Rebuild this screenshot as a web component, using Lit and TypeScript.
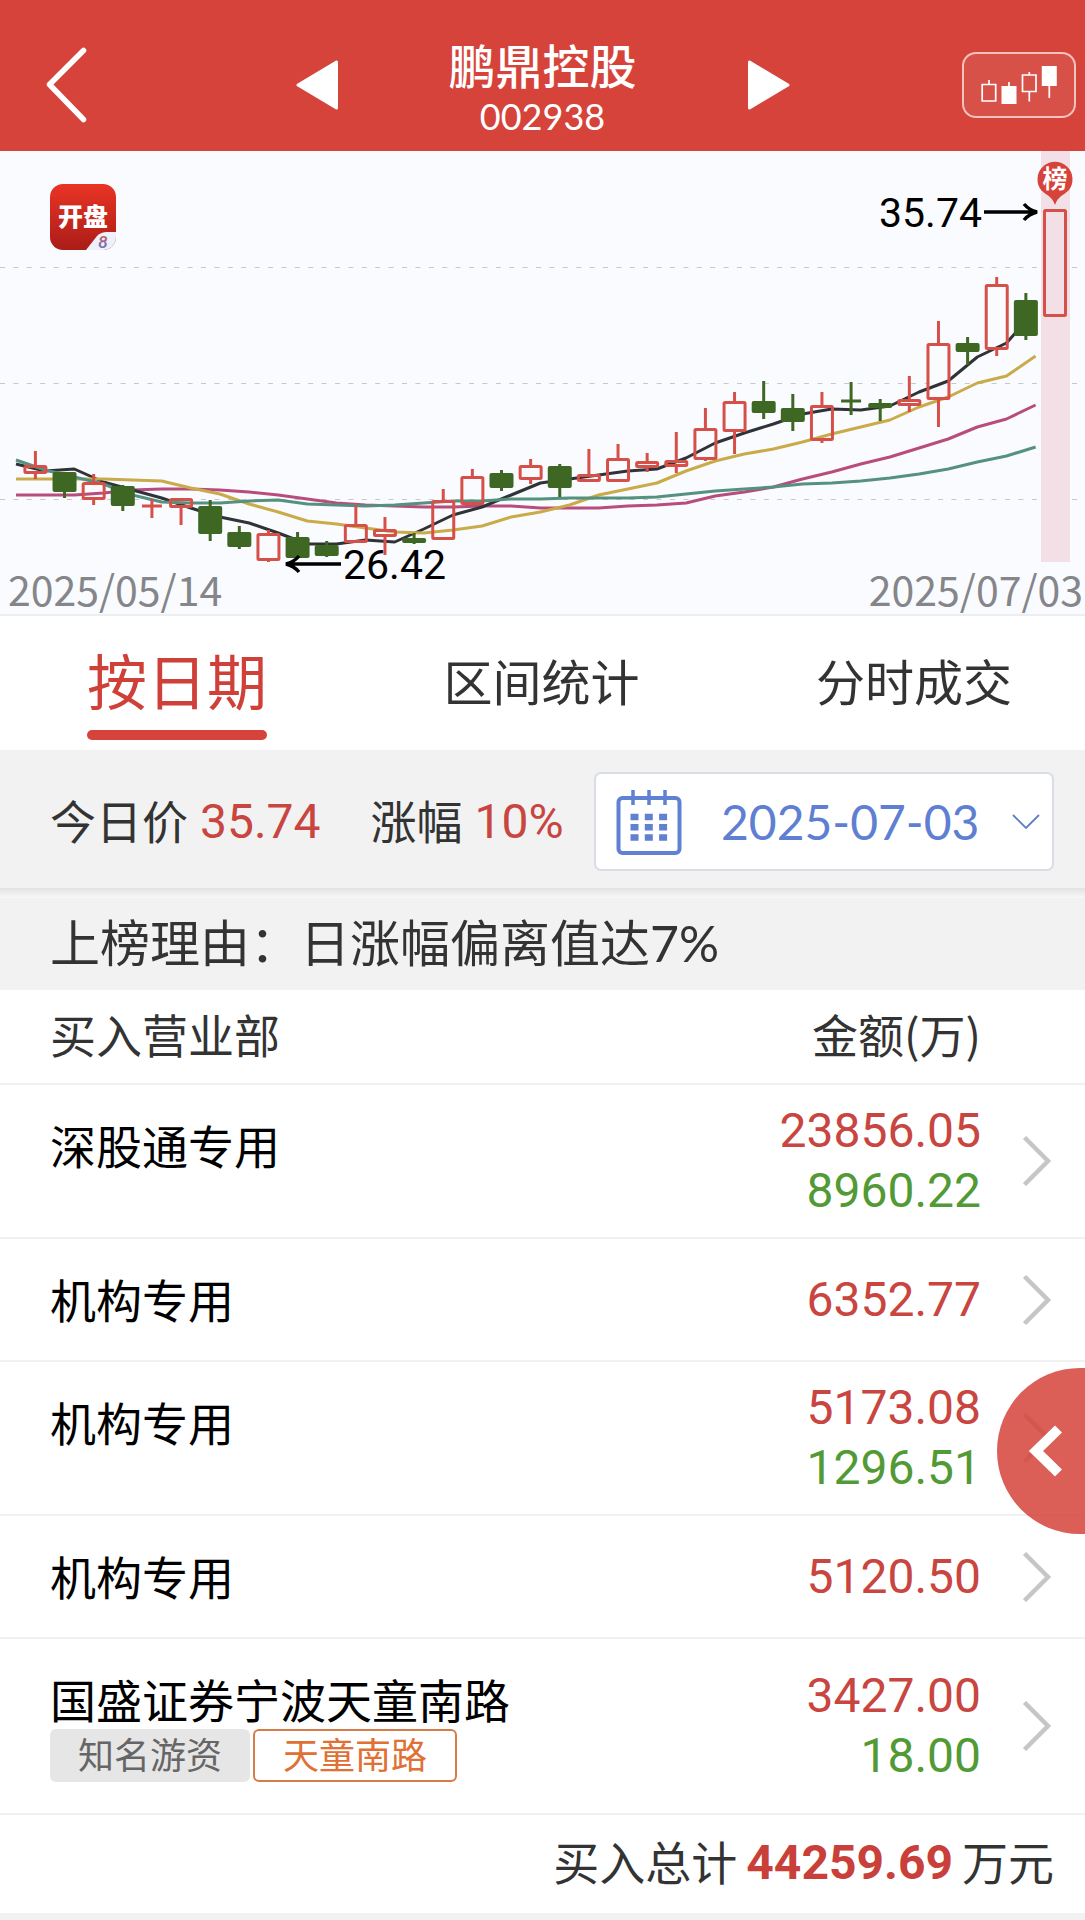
import { LitElement, html, svg, css, nothing } from "lit";
import { customElement, property, state } from "lit/decorators.js";
import { classMap } from "lit/directives/class-map.js";

type Candle = { up: boolean; top: number; bottom: number; high: number; low: number };

const up = (top: number, bottom: number, high: number, low: number): Candle => ({ up: true, top, bottom, high, low });
const down = (top: number, bottom: number, high: number, low: number): Candle => ({ up: false, top, bottom, high, low });

const CANDLES: Candle[] = [
  up(465, 474, 451, 479), down(472, 492, 472, 498), up(482, 500, 474, 505), down(486, 506, 485, 511),
  up(506, 507, 499, 518), up(498, 508, 498, 525), down(506, 534, 500, 541), down(532, 547, 526, 549),
  up(533, 561, 530, 562), down(537, 558, 532, 558), down(545, 556, 541, 557), up(524, 543, 505, 543),
  up(529, 537, 517, 555), down(538, 543, 533, 544), up(500, 540, 489, 540), up(476, 505, 469, 505),
  down(473, 488, 470, 491), up(465, 480, 459, 484), down(466, 488, 464, 497), up(474, 482, 449, 482),
  up(458, 482, 444, 482), up(461, 468, 453, 472), up(460, 467, 432, 473), up(428, 460, 408, 461),
  up(401, 432, 392, 454), down(401, 413, 381, 419), down(408, 422, 394, 431), up(405, 441, 392, 443),
  down(401, 402, 382, 415), down(403, 408, 399, 421), up(399, 406, 376, 412), up(343, 400, 321, 427),
  down(343, 352, 337, 365), up(284, 350, 277, 356), down(300, 336, 293, 340), up(209, 317, 209, 317),
];

const AVERAGES = [
  { color: "#b84d7d", values: [495, 495, 495, 493, 490, 489, 489, 490, 492, 495, 499, 503, 505, 506, 507, 507, 506, 506, 508, 508, 508, 506, 505, 503, 496, 492, 487, 479, 472, 464, 457, 448, 439, 427, 419, 405] },
  { color: "#2f3237", values: [464, 471, 469, 482, 490, 498, 508, 517, 523, 533, 544, 544, 540, 542, 529, 515, 507, 495, 483, 479, 475, 471, 469, 458, 443, 433, 424, 414, 409, 410, 406, 392, 381, 357, 343, 310] },
  { color: "#c9ab49", values: [479, 479, 479, 479, 480, 481, 488, 494, 504, 512, 521, 524, 528, 532, 533, 530, 526, 517, 512, 505, 495, 489, 483, 471, 461, 454, 449, 442, 434, 427, 420, 407, 397, 383, 376, 356] },
  { color: "#55917f", values: [460, 470, 477, 484, 495, 502, 503, 503, 501, 500, 504, 505, 506, 505, 503, 501, 501, 499, 499, 498, 498, 498, 497, 494, 491, 489, 487, 484, 483, 481, 478, 474, 469, 462, 456, 447] },
];

const STEP = 1019.6 / 35;

@customElement("kline-chart")
export class KlineChart extends LitElement {
  static styles = css`
    :host { display: block; background: #fafbff; border-bottom: 2px solid #eceff2; }
    .plot { display: block; width: 100%; height: auto; overflow: visible; }
    .dates {
      display: flex; justify-content: space-between; padding: 0 2px 4px 8px;
      color: #85868a; font-family: "Noto Sans CJK SC", sans-serif; font-size: 41px; line-height: 43px;
    }
    .price { font-family: Roboto, sans-serif; font-size: 41px; fill: #000; }
    .flag { font-size: 25px; font-weight: 700; fill: #fff; text-anchor: middle; }
    .brand { font-size: 25px; font-weight: 900; fill: #fff; text-anchor: middle; }
    .eight { font-size: 17px; font-weight: 700; font-style: italic; text-anchor: middle; }
  `;

  private candle(c: Candle, i: number) {
    const x = 35.4 + STEP * i;
    const color = c.up ? "#d6504a" : "#3d6722";
    const height = c.bottom - c.top;
    if (height <= 1) {
      return svg`<path d="M${x - 10} ${c.top}h20M${x} ${c.high}V${c.low}" stroke=${color} stroke-width="3" fill="none"/>`;
    }
    return svg`
      <path d="M${x} ${c.high}V${c.top + 1}M${x} ${c.bottom - 1}V${c.low}" stroke=${color} stroke-width="3"/>
      ${c.up
        ? svg`<rect x=${x - 10.5} y=${c.top + 1.5} width="21" height=${height - 3} rx="1" fill="none" stroke=${color} stroke-width="3"/>`
        : svg`<rect x=${x - 12} y=${c.top} width="24" height=${height} rx="2" fill=${color}/>`}`;
  }

  render() {
    return html`
      <svg class="plot" viewBox="0 151 1085 416" role="img" aria-label="日K线图">
        <defs>
          <linearGradient id="brand-red" x1="0" y1="0" x2="0" y2="1">
            <stop offset="0" stop-color="#e93425"/><stop offset="1" stop-color="#ab1d18"/>
          </linearGradient>
          <linearGradient id="eight-ink" x1="0" y1="0" x2="0" y2="1">
            <stop offset="0" stop-color="#e0553c"/><stop offset="1" stop-color="#4f7be0"/>
          </linearGradient>
        </defs>
        <path d="M0 267.500H1085M0 383.500H1085M0 499.500H1085" stroke="#c6c8cc" stroke-width="1" stroke-dasharray="5 8.400"/>
        <rect x="1041" y="151" width="29" height="411" fill="#f2e0e6"/>
        ${AVERAGES.map(a => svg`<polyline fill="none" stroke=${a.color} stroke-width="3" stroke-linejoin="round"
          points=${a.values.map((y, i) => `${(16 + STEP * i).toFixed(1)},${y}`).join(" ")}/>`)}
        ${CANDLES.map((c, i) => this.candle(c, i))}

        <path d="M1055 205C1052 196 1046 195 1041.500 190.500A17.500 17.500 0 1 1 1068.500 190.500C1064 195 1058 196 1055 205Z" fill="#d6433a"/>
        <text class="flag" x="1055" y="188">榜</text>

        <text class="price" x="879" y="227">35.74</text>
        <path d="M984 212H1036M1024 204Q1029 210 1037 212Q1029 214 1024 220" fill="none" stroke="#000" stroke-width="3.500"/>
        <text class="price" x="343" y="579">26.42</text>
        <path d="M341 564H288M299 556Q294 562 286 564Q294 566 299 572" fill="none" stroke="#000" stroke-width="3.500"/>

        <rect x="50" y="184" width="66" height="66" rx="13" fill="url(#brand-red)"/>
        <path d="M86 250L97 236Q101 232 107 232H116V237A13 13 0 0 1 103 250Z" fill="#eef1fa"/>
        <text class="brand" x="83" y="226">开盘</text>
        <text class="eight" x="103" y="248" fill="url(#eight-ink)">8</text>
      </svg>
      <div class="dates"><span>2025/05/14</span><span>2025/07/03</span></div>
    `;
  }
}

type Seat = { name: string; buy: string; sell?: string; tags?: { text: string; outlined: boolean }[] };

const SEATS: Seat[] = [
  { name: "深股通专用", buy: "23856.05", sell: "8960.22" },
  { name: "机构专用", buy: "6352.77" },
  { name: "机构专用", buy: "5173.08", sell: "1296.51" },
  { name: "机构专用", buy: "5120.50" },
  {
    name: "国盛证券宁波天童南路", buy: "3427.00", sell: "18.00",
    tags: [{ text: "知名游资", outlined: false }, { text: "天童南路", outlined: true }],
  },
];

@customElement("seat-table")
export class SeatTable extends LitElement {
  @property({ attribute: false }) seats: Seat[] = [];

  static styles = css`
    :host { display: block; position: relative; background: #fff; overflow: hidden; }
    .table { width: 100%; border-collapse: separate; border-spacing: 0; }
    th, td { padding: 0; border-bottom: 2px solid #f1f1f1; font-weight: 400; }
    th {
      height: 95px; box-sizing: border-box; padding-bottom: 8px; color: #333;
      font-family: "Noto Sans CJK SC", sans-serif; font-size: 46px; line-height: 56px;
    }
    .name { text-align: left; padding-left: 50px; }
    .amount { text-align: right; }
    .more { width: 104px; }
    td.name { vertical-align: top; padding-top: 34px; padding-bottom: 31px; color: #000; font-size: 46px; line-height: 56px; }
    td.amount {
      vertical-align: middle; padding-top: 16px; padding-bottom: 16px;
      font-family: Roboto, sans-serif; font-size: 48px; line-height: 60px;
    }
    td.more { vertical-align: middle; }
    .buy, .sell { display: block; }
    .buy { color: #c9453f; }
    .sell { color: #519a35; }
    .tags { display: flex; gap: 3px; }
    .tag { padding: 0 28px; border-radius: 6px; background: #e6e6e6; color: #666; font-size: 36px; line-height: 53px; }
    .tag.outlined { background: #fff; color: #e07033; border: 2px solid #d67c48; line-height: 49px; }
    .open { display: block; border: 0; background: none; padding: 0 0 0 41px; cursor: pointer; }
    .open svg { display: block; }
    .total {
      display: flex; justify-content: flex-end; align-items: center; gap: 9px; padding: 18px 31px 20px;
      color: #333; font-size: 46px; line-height: 60px;
    }
    .sum { color: #c9403a; font-family: Roboto, sans-serif; font-size: 48px; font-weight: 700; }
    .drawer {
      position: absolute; right: 0; top: 378px; width: 88px; height: 166px; padding: 0 0 0 30px; border: 0;
      border-radius: 83px 0 0 83px; background: rgba(213, 67, 58, 0.85); cursor: pointer;
    }
    .drawer svg { display: block; }
  `;

  render() {
    return html`
      <table class="table">
        <thead>
          <tr><th class="name" scope="col">买入营业部</th><th class="amount" scope="col">金额(万)</th><th class="more"></th></tr>
        </thead>
        <tbody>
          ${this.seats.map(seat => html`
            <tr>
              <td class="name">
                ${seat.name}
                ${seat.tags
                  ? html`<div class="tags">${seat.tags.map(t => html`<span class=${classMap({ tag: true, outlined: t.outlined })}>${t.text}</span>`)}</div>`
                  : nothing}
              </td>
              <td class="amount">
                <span class="buy">${seat.buy}</span>
                ${seat.sell ? html`<span class="sell">${seat.sell}</span>` : nothing}
              </td>
              <td class="more">
                <button class="open" type="button" aria-label="查看${seat.name}">
                  <svg width="30" height="50" viewBox="0 0 30 50" fill="none" stroke="#c6c6c6" stroke-width="4.500">
                    <path d="M2.500 1.500L26 25L2.500 48.500"/>
                  </svg>
                </button>
              </td>
            </tr>`)}
        </tbody>
      </table>
      <div class="total"><span>买入总计</span><strong class="sum">44259.69</strong><span>万元</span></div>
      <button class="drawer" type="button" aria-label="展开侧栏">
        <svg width="36" height="52" viewBox="0 0 36 52" fill="none" stroke="#fff" stroke-width="10">
          <path d="M31.500 4L9 26L31.500 48"/>
        </svg>
      </button>
    `;
  }
}

const TABS = ["按日期", "区间统计", "分时成交"];

@customElement("app-root")
export class AppRoot extends LitElement {
  @state() private tab = 0;

  static styles = css`
    :host {
      display: block; min-height: 100vh; background: #f2f2f2; color: #333;
      font-family: Lato, "Noto Sans CJK SC", sans-serif;
    }
    button, select { font-family: inherit; }
    button { cursor: pointer; }
    .header {
      display: grid; grid-template-columns: 1fr auto 1fr; align-items: center;
      height: 151px; box-sizing: border-box; padding: 18px 9px 0; background: #d5433a; color: #fff;
    }
    .icon { display: block; padding: 0; border: 0; background: none; }
    .icon svg { display: block; }
    .back { padding-left: 37px; }
    .stock { display: flex; align-items: center; gap: 111px; }
    .title { padding-top: 12px; text-align: center; }
    .stock-name { margin: 0; font-size: 47px; font-weight: 500; line-height: 50px; }
    .code { font-size: 36px; line-height: 50px; }
    .kline {
      justify-self: end; width: 114px; height: 66px; padding: 0;
      border: 2px solid rgba(255, 255, 255, 0.65); border-radius: 14px; background: rgba(255, 255, 255, 0.08);
    }
    .kline svg { display: block; }
    .tabs { display: flex; justify-content: space-between; padding: 0 73px 10px 87px; background: #fff; }
    .tab {
      position: relative; height: 124px; padding: 14px 0 6px; border: 0; background: none;
      color: #333; font-size: 49px; line-height: 104px;
    }
    .tab.active { color: #cf4039; font-size: 60px; }
    .tab.active::after {
      content: ""; position: absolute; left: 0; right: 0; bottom: 0; height: 10px; border-radius: 5px; background: #d5433a;
    }
    .info {
      display: flex; align-items: center; gap: 30px; padding: 22px 31px 17px 50px;
      font-size: 46px; line-height: 60px;
    }
    .stat { display: flex; gap: 12px; white-space: nowrap; }
    .stat + .stat { margin-left: 20px; }
    .red { color: #c9453f; font-family: Roboto, sans-serif; font-size: 48px; }
    .date {
      display: flex; flex: none; align-items: center; width: 460px; height: 99px; box-sizing: border-box;
      margin-left: auto; padding: 0 12px 0 20px; border: 2px solid #d9dde5; border-radius: 7px; background: #fff;
    }
    .date svg { flex: none; }
    .select {
      flex: 1; min-width: 0; padding: 0 0 0 39px; border: 0; background: none; appearance: none;
      color: #5f80d2; font-size: 48px; line-height: 60px; cursor: pointer;
    }
    .divider { height: 10px; background: linear-gradient(#e2e2e2, #f8f8f8); }
    .reason { margin: 0; padding: 15px 50px 17px; font-size: 50px; font-weight: 400; line-height: 60px; }
  `;

  render() {
    return html`
      <header class="header">
        <button class="icon back" type="button" aria-label="返回">
          <svg width="42" height="76" viewBox="0 0 42 76" fill="none" stroke="#fff" stroke-width="5.500" stroke-linecap="round" stroke-linejoin="round">
            <path d="M37.500 3.500L3.500 37.500L37.500 72.500"/>
          </svg>
        </button>
        <div class="stock">
          <button class="icon" type="button" aria-label="上一只">
            <svg width="42" height="50" viewBox="0 0 42 50" fill="#fff" stroke="#fff" stroke-width="3" stroke-linejoin="round"><path d="M40.500 2V48L2 25Z"/></svg>
          </button>
          <div class="title">
            <h1 class="stock-name">鹏鼎控股</h1>
            <div class="code">002938</div>
          </div>
          <button class="icon" type="button" aria-label="下一只">
            <svg width="42" height="50" viewBox="0 0 42 50" fill="#fff" stroke="#fff" stroke-width="3" stroke-linejoin="round"><path d="M1.500 2V48L40 25Z"/></svg>
          </button>
        </div>
        <button class="kline" type="button" aria-label="K线">
          <svg width="110" height="62" viewBox="964 53 110 62" fill="none" stroke="#fff" stroke-width="1.700">
            <path d="M982.200 83.500h13.500v16.500h-13.500zM989 79v4.500M1022.500 74h13.500v16.500h-13.500zM1029.300 71v3M1029.300 90.500v10M1009 81v5M1049.300 84v13"/>
            <path d="M1001.500 85h15v18h-15zM1041.800 65h15v20h-15z" fill="#fff" stroke="none"/>
          </svg>
        </button>
      </header>

      <kline-chart></kline-chart>

      <nav class="tabs">
        ${TABS.map((label, i) => html`
          <button type="button" class=${classMap({ tab: true, active: i === this.tab })} @click=${() => (this.tab = i)}>${label}</button>`)}
      </nav>

      <section class="info">
        <div class="stat"><span>今日价</span><span class="red">35.74</span></div>
        <div class="stat"><span>涨幅</span><span class="red">10%</span></div>
        <div class="date">
          <svg width="66" height="66" viewBox="0 0 66 66" fill="none" stroke="#6080d4" stroke-width="4">
            <rect x="2.500" y="9" width="61" height="55" rx="4"/>
            <path d="M17 1V16M33 1V16M49 1V16" stroke-width="3.500"/>
            <path d="M14.500 28h8M28.800 28h8M43.100 28h8M14.500 38.200h8M28.800 38.200h8M43.100 38.200h8M14.500 48.500h8M28.800 48.500h8M43.100 48.500h8" stroke-width="6.500"/>
          </svg>
          <select class="select" aria-label="日期"><option>2025-07-03</option></select>
          <svg width="28" height="18" viewBox="0 0 28 18" fill="none" stroke="#5f80c4" stroke-width="1.800"><path d="M1 2L14 15L27 2"/></svg>
        </div>
      </section>
      <div class="divider"></div>
      <h2 class="reason">上榜理由：日涨幅偏离值达7%</h2>

      <seat-table .seats=${SEATS}></seat-table>
    `;
  }
}
